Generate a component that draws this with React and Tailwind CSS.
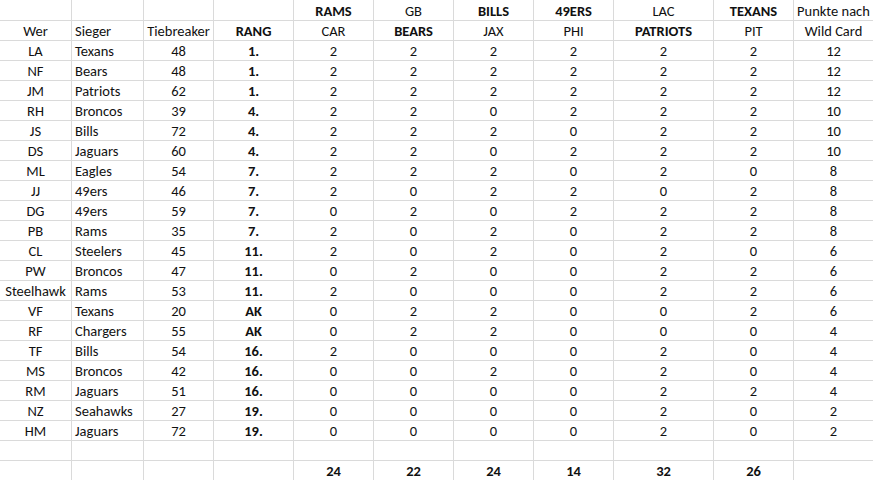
import React from "react";

const widths = "grid-cols-[72px_72px_70px_80px_80px_80px_80px_80px_100px_80px_80px]";

const rows = [
  ["LA", "Texans", "48", "1.", 2, 2, 2, 2, 2, 2, 12],
  ["NF", "Bears", "48", "1.", 2, 2, 2, 2, 2, 2, 12],
  ["JM", "Patriots", "62", "1.", 2, 2, 2, 2, 2, 2, 12],
  ["RH", "Broncos", "39", "4.", 2, 2, 0, 2, 2, 2, 10],
  ["JS", "Bills", "72", "4.", 2, 2, 2, 0, 2, 2, 10],
  ["DS", "Jaguars", "60", "4.", 2, 2, 0, 2, 2, 2, 10],
  ["ML", "Eagles", "54", "7.", 2, 2, 2, 0, 2, 0, 8],
  ["JJ", "49ers", "46", "7.", 2, 0, 2, 2, 0, 2, 8],
  ["DG", "49ers", "59", "7.", 0, 2, 0, 2, 2, 2, 8],
  ["PB", "Rams", "35", "7.", 2, 0, 2, 0, 2, 2, 8],
  ["CL", "Steelers", "45", "11.", 2, 0, 2, 0, 2, 0, 6],
  ["PW", "Broncos", "47", "11.", 0, 2, 0, 0, 2, 2, 6],
  ["Steelhawk", "Rams", "53", "11.", 2, 0, 0, 0, 2, 2, 6],
  ["VF", "Texans", "20", "AK", 0, 2, 2, 0, 0, 2, 6],
  ["RF", "Chargers", "55", "AK", 0, 2, 2, 0, 0, 0, 4],
  ["TF", "Bills", "54", "16.", 2, 0, 0, 0, 2, 0, 4],
  ["MS", "Broncos", "42", "16.", 0, 0, 2, 0, 2, 0, 4],
  ["RM", "Jaguars", "51", "16.", 0, 0, 0, 0, 2, 2, 4],
  ["NZ", "Seahawks", "27", "19.", 0, 0, 0, 0, 2, 0, 2],
  ["HM", "Jaguars", "72", "19.", 0, 0, 0, 0, 2, 0, 2],
];

function Cell({ children, left, bold, first }) {
  return (
    <div
      className={
        "border-r border-b border-[#dadada] overflow-visible whitespace-nowrap text-[14.5px] leading-[19px] " +
        (first ? "h-[21px] pt-[2px] " : "h-[20px] pt-[1px] ") +
        (left ? "text-left pl-[3px] " : "text-center ") +
        (bold ? "font-bold" : "font-normal")
      }
    >
      {children}
    </div>
  );
}

export default function App() {
  const h0 = ["", "", "", "", "RAMS", "GB", "BILLS", "49ERS", "LAC", "TEXANS", "Punkte nach"];
  const b0 = [0, 0, 0, 0, 1, 0, 1, 1, 0, 1, 0];
  const h1 = ["Wer", "Sieger", "Tiebreaker", "RANG", "CAR", "BEARS", "JAX", "PHI", "PATRIOTS", "PIT", "Wild Card"];
  const b1 = [0, 0, 0, 1, 0, 1, 0, 0, 1, 0, 0];
  const totals = ["", "", "", "", "24", "22", "24", "14", "32", "26", ""];
  return (
    <div
      className="w-[873px] h-[480px] overflow-hidden bg-white text-[#111]"
      style={{ fontFamily: "Carlito, Calibri, Lato, 'Open Sans', sans-serif" }}
    >
      <div className={"grid w-[874px] " + widths}>
        {h0.map((t, i) => (
          <Cell key={"a" + i} first bold={b0[i]}>{t}</Cell>
        ))}
        {h1.map((t, i) => (
          <Cell key={"b" + i} bold={b1[i]} left={i === 1}>{t}</Cell>
        ))}
        {rows.map((r, ri) =>
          r.map((t, i) => (
            <Cell key={ri + "-" + i} left={i === 1} bold={i === 3}>{t}</Cell>
          ))
        )}
        {totals.map((t, i) => (
          <Cell key={"e" + i}>{""}</Cell>
        ))}
        {totals.map((t, i) => (
          <Cell key={"t" + i} bold>{t}</Cell>
        ))}
      </div>
    </div>
  );
}
